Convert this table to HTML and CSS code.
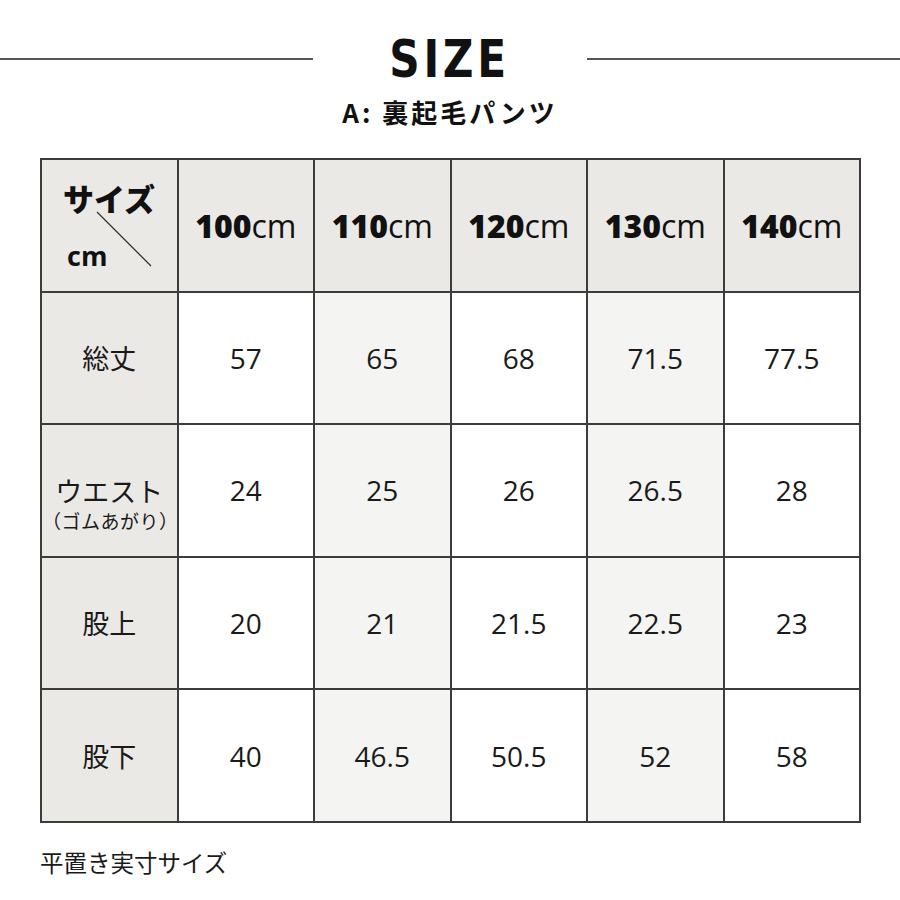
FILE: index.html
```html
<!DOCTYPE html>
<html lang="ja">
<head>
<meta charset="utf-8">
<link rel="stylesheet" href="styles.css">
</head>
<body>
<div class="page">
  <div class="title-row">
    <span class="rule"></span>
    <h1 class="title">SIZE</h1>
    <span class="rule"></span>
  </div>
  <div class="subtitle">A: 裏起毛パンツ</div>
  <table class="size-table">
    <tr class="head">
      <th class="corner">
        <span class="c-size">サイズ</span>
        <span class="c-cm">cm</span>
        <svg class="diag" width="60" height="60" viewBox="0 0 60 60"><line x1="3" y1="2" x2="57" y2="56" stroke="#333" stroke-width="1.3"/></svg>
      </th>
      <th><b>100</b>cm</th>
      <th><b>110</b>cm</th>
      <th><b>120</b>cm</th>
      <th><b>130</b>cm</th>
      <th><b>140</b>cm</th>
    </tr>
    <tr>
      <th class="label">総丈</th>
      <td>57</td><td class="alt">65</td><td>68</td><td class="alt">71.5</td><td>77.5</td>
    </tr>
    <tr>
      <th class="label"><div class="waist">ウエスト<span class="note">（ゴムあがり）</span></div></th>
      <td>24</td><td class="alt">25</td><td>26</td><td class="alt">26.5</td><td>28</td>
    </tr>
    <tr>
      <th class="label">股上</th>
      <td>20</td><td class="alt">21</td><td>21.5</td><td class="alt">22.5</td><td>23</td>
    </tr>
    <tr>
      <th class="label">股下</th>
      <td>40</td><td class="alt">46.5</td><td>50.5</td><td class="alt">52</td><td>58</td>
    </tr>
  </table>
  <p class="foot">平置き実寸サイズ</p>
</div>
</body>
</html>
```
FILE: styles.css
```css
html, body {
  margin: 0;
  padding: 0;
  background: #fff;
}
.page {
  width: 900px;
  height: 900px;
  position: relative;
  font-family: "Noto Sans CJK JP", "Open Sans", sans-serif;
  color: #1a1a1a;
}
.title-row {
  display: flex;
  align-items: center;
  padding-top: 31px;
  height: 56px;
}
.rule {
  flex: 1;
  height: 2px;
  background: #555;
}
.title {
  margin: 0 71px;
  font-family: "DejaVu Sans", sans-serif;
  font-weight: 700;
  font-size: 46px;
  letter-spacing: 4px;
  line-height: 56px;
  color: #111;
  transform: scale(0.92, 1.12);
}
.subtitle {
  text-align: center;
  font-family: "Noto Sans CJK JP", sans-serif;
  font-weight: 700;
  font-size: 26px;
  line-height: 34px;
  margin-top: 8px;
  color: #111;
  letter-spacing: 3px;
}
.size-table {
  margin: 29px 0 0 40px;
  width: 821px;
  border-collapse: collapse;
  table-layout: fixed;
}
.size-table th, .size-table td {
  border: 2px solid #3c3c3c;
  height: 130.6px;
  padding: 0;
  text-align: center;
  vertical-align: middle;
}
.head th {
  background: #ebe9e6;
  font-family: "Open Sans", sans-serif;
  font-weight: 400;
  font-size: 32px;
  color: #111;
}
.head th b {
  font-weight: 800;
}
.corner {
  position: relative;
}
.c-size {
  position: absolute;
  left: 21px;
  top: 19px;
  font-family: "Noto Sans CJK JP", sans-serif;
  font-weight: 900;
  font-size: 31px;
  line-height: 38px;
}
.c-cm {
  position: absolute;
  left: 25px;
  top: 78px;
  font-family: "Open Sans", sans-serif;
  font-weight: 700;
  font-size: 27px;
  line-height: 36px;
}
.diag {
  position: absolute;
  left: 52px;
  top: 50px;
}
.label {
  background: #ebe9e6;
  font-family: "Noto Sans CJK JP", sans-serif;
  font-weight: 400;
  font-size: 27px;
  line-height: 34px;
  color: #1a1a1a;
}
.waist {
  transform: translateY(14px);
}
.note {
  display: block;
  font-size: 19px;
  line-height: 26px;
  letter-spacing: 0.5px;
}
.size-table td {
  font-family: "Open Sans", sans-serif;
  font-size: 28px;
  color: #1a1a1a;
  background: #fff;
}
.size-table td.alt {
  background: #f4f4f2;
}
.foot {
  margin: 22px 0 0 40px;
  font-family: "Noto Sans CJK JP", sans-serif;
  font-size: 23.5px;
  line-height: 34px;
  color: #1a1a1a;
}
```
